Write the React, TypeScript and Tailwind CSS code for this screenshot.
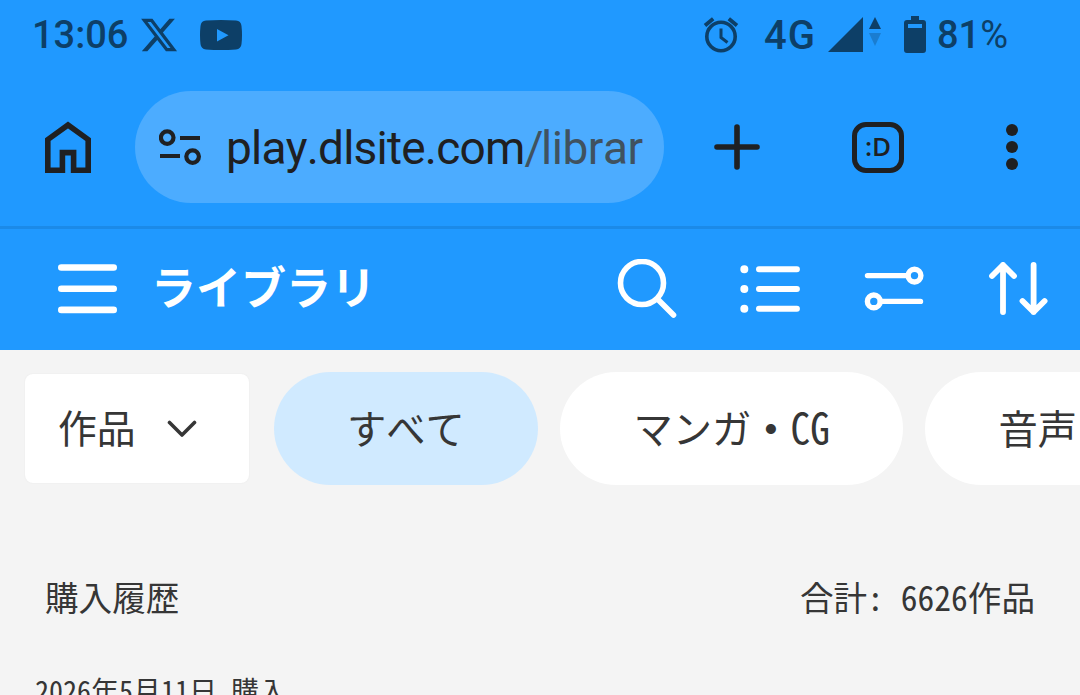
import type { ReactNode } from 'react';
import { FaXTwitter } from 'react-icons/fa6';

interface ChipProps {
  children: ReactNode;
  active?: boolean;
}

function AlarmIcon() {
  return (
    <svg width="36" height="36" viewBox="0 0 36 36" fill="none" stroke="currentColor">
      <circle cx="18" cy="19.5" r="14.2" strokeWidth="3.6" />
      <path d="M18 11.5v9l6.5 5" strokeWidth="3" />
      <path d="M2 8.5 10.2 1.7M34 8.5 25.8 1.7" strokeWidth="3.8" />
    </svg>
  );
}

function StatusBar() {
  return (
    <div className="flex h-[70px] items-center pl-8 pr-[71px] font-['Roboto',sans-serif] text-[38px] font-medium leading-none text-[#0d3f67]">
      <span className="w-[96px] whitespace-nowrap">13:06</span>
      <FaXTwitter className="ml-[11px] size-[40px]" />
      <svg className="ml-[21px]" width="42" height="30" viewBox="0 0 42 30">
        <path
          fill="currentColor"
          fillRule="evenodd"
          d="M6 .6Q21-.6 36 .6Q41 1 41.5 6Q42.5 15 41.5 24Q41 29 36 29.4Q21 30.6 6 29.4Q1 29 .5 24Q-.5 15 .5 6Q1 1 6 .6ZM17 9v12.5l11.5-6.2Z"
        />
      </svg>
      <div className="ml-auto flex items-center">
        <AlarmIcon />
        <span className="ml-[25px] w-[52px] whitespace-nowrap pt-px text-[40px] tracking-[1px]">4G</span>
        <svg className="ml-3" width="54" height="36" viewBox="0 0 54 36" fill="currentColor">
          <path d="M35 0v35H0Z" />
          <path d="M47 0 53 12H41Z" />
          <path d="M41 16h12l-6 13Z" opacity=".3" />
        </svg>
        <svg className="ml-[22px]" width="22" height="38" viewBox="0 0 22 38">
          <path
            fill="currentColor"
            fillRule="evenodd"
            d="M7 0h8v4h4q3 0 3 3v27q0 3-3 3H3q-3 0-3-3V7q0-3 3-3h4ZM4 8v4h14V8Z"
          />
        </svg>
        <span className="ml-[11px] w-[72px] whitespace-nowrap">
          81<span className="font-normal">%</span>
        </span>
      </div>
    </div>
  );
}

function BrowserBar() {
  return (
    <div className="flex h-[159px] items-center border-b-[3px] border-[#1b8ae8] pb-0.5 text-[#1f2022]">
      <svg className="ml-[45px]" width="46" height="52" viewBox="0 0 46 52" fill="none" stroke="currentColor" strokeWidth="5.6">
        <path d="M2.8 49.2V18.6L23 4 43.2 18.6v30.6H28.6V31.6H17.4v17.6Z" />
      </svg>
      <div className="ml-[44px] flex h-28 w-[529px] items-center rounded-full bg-[#4cacff]">
        <svg className="ml-6 shrink-0" width="42" height="36" viewBox="0 0 42 36" fill="none" stroke="currentColor" strokeWidth="4.2">
          <circle cx="8.2" cy="8.6" r="6.3" />
          <circle cx="33.6" cy="27.6" r="6.3" />
          <path d="M21 9h20M1 27h20" />
        </svg>
        <div className="ml-[25px] w-[417px] overflow-hidden whitespace-nowrap pt-px font-['Roboto',sans-serif] text-[46px] leading-[60px] tracking-[-0.78px]">
          play.dlsite.com
          <span className="text-[#40525f]">
            <span className="tracking-[-2.4px]">/</span>
            <span className="tracking-[-0.5px]">librar</span>
          </span>
        </div>
      </div>
      <svg className="ml-[50px]" width="46" height="46" viewBox="0 0 46 46" stroke="currentColor" strokeWidth="5.6" strokeLinecap="round">
        <path d="M23 3v40M3 23h40" />
      </svg>
      <div className="ml-[92px] flex h-[51px] w-[52px] items-center justify-center rounded-[14px] border-[5.5px] border-current pb-0.5 font-['Open_Sans',sans-serif] text-[26px] font-semibold leading-none">
        :D
      </div>
      <svg className="ml-[102px]" width="12" height="46" viewBox="0 0 12 46" fill="currentColor">
        <circle cx="6" cy="6" r="6" />
        <circle cx="6" cy="23" r="6" />
        <circle cx="6" cy="40" r="6" />
      </svg>
    </div>
  );
}

function LibraryHeader() {
  return (
    <header className="flex h-[121px] items-center pb-px text-white">
      <svg className="ml-[58px]" width="60" height="50" viewBox="0 0 60 50" stroke="currentColor" strokeWidth="6.6" strokeLinecap="round">
        <path d="M3.3 3.5h52.4M3.3 24.8h52.4M3.3 45.9h52.4" />
      </svg>
      <h1 className="ml-[33px] w-[228px] whitespace-nowrap pb-2 text-[45px] font-bold leading-none">ライブラリ</h1>
      <svg className="ml-[238px]" width="60" height="60" viewBox="0 0 60 60" fill="none" stroke="currentColor" strokeWidth="5.6" strokeLinecap="round">
        <circle cx="25" cy="24" r="21.5" />
        <path d="M41 40.5 56.5 56" />
      </svg>
      <svg className="ml-[63px]" width="60" height="48" viewBox="0 0 60 48" stroke="currentColor" strokeWidth="6" strokeLinecap="round">
        <path d="M19 4.3h37.9M19 24h37.9M19 43.7h37.9" />
        <path d="M4.3 4.3h.01M4.3 24h.01M4.3 43.7h.01" strokeWidth="8" />
      </svg>
      <svg className="ml-[64px]" width="60" height="46" viewBox="0 0 60 46" fill="none" stroke="currentColor" strokeWidth="5.4" strokeLinecap="round">
        <circle cx="50.5" cy="9.6" r="6.4" />
        <circle cx="9.8" cy="35.4" r="6.4" />
        <path d="M3.5 9.6H43.5M16.5 35.4H56.5" />
      </svg>
      <svg className="ml-[65px]" width="60" height="54" viewBox="0 0 60 54" fill="none" stroke="currentColor" strokeWidth="5.8" strokeLinecap="round" strokeLinejoin="round">
        <path d="M14 50V3M3 14 14 3l11 11" />
        <path d="M44.6 3v47M33.5 39l11.1 11 11-11" />
      </svg>
    </header>
  );
}

// Half-width latin, drawn a little taller than the kana beside it.
function Narrow({ children }: { children: ReactNode }) {
  return <span className="inline-block origin-[50%_80%] scale-y-106">{children}</span>;
}

function Chip({ children, active }: ChipProps) {
  return (
    <button
      className={`h-[113px] shrink-0 whitespace-nowrap rounded-full px-[73px] pb-1 ${active ? 'bg-[#d0eaff]' : 'bg-white'}`}
    >
      {children}
    </button>
  );
}

function FilterRow() {
  return (
    <div className="flex items-center overflow-hidden pt-[22px] text-[39.3px] leading-none">
      <button className="ml-[25px] flex h-[109px] w-[224px] shrink-0 items-center rounded-lg bg-white pl-[33px] shadow-[0_0_2px_rgba(0,0,0,0.06)]">
        <span className="w-[77px] whitespace-nowrap pb-1 text-[38.8px]">作品</span>
        <svg className="ml-[32px]" width="30" height="18" viewBox="0 0 30 18" fill="none" stroke="currentColor" strokeWidth="3.6" strokeLinecap="round" strokeLinejoin="round">
          <path d="M2.5 2.5 15 15 27.5 2.5" />
        </svg>
      </button>
      <div className="ml-[25px] flex gap-[22.5px]">
        <Chip active>すべて</Chip>
        <Chip>
          マンガ<span className="font-bold">・</span>
          <Narrow>CG</Narrow>
        </Chip>
        <Chip>音声</Chip>
      </div>
    </div>
  );
}

export default function App() {
  return (
    <div className="h-[695px] w-[1080px] overflow-hidden bg-[#f4f4f4] font-['Noto_Sans_CJK_JP',sans-serif] text-[#363636] [font-feature-settings:'hwid'] [font-kerning:none]">
      <div className="bg-[#2099ff]">
        <StatusBar />
        <BrowserBar />
        <LibraryHeader />
      </div>
      <FilterRow />
      <main>
        <div className="mt-[87px] flex justify-between pl-[45px] pr-[45px] text-[33.6px] leading-[50px]">
          <h2>購入履歴</h2>
          <p>
            合計: <Narrow>6626</Narrow>作品
          </p>
        </div>
        <p className="ml-[35px] mt-[48px] text-[28px] leading-10">
          <Narrow>2026</Narrow>年<Narrow>5</Narrow>月<Narrow>11</Narrow>日 購入
        </p>
      </main>
    </div>
  );
}
